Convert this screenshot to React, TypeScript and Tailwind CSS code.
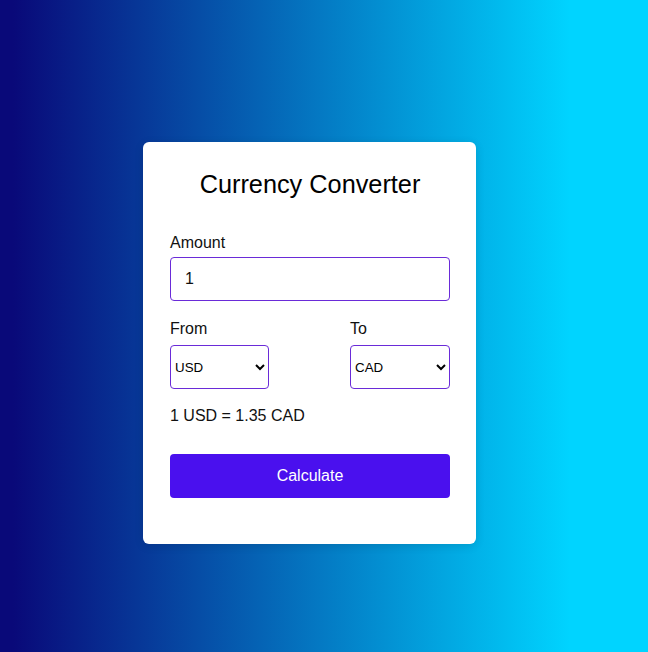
import React, { useState } from "react";

export default function App() {
  const [amount, setAmount] = useState("1");
  const [from, setFrom] = useState("USD");
  const [to, setTo] = useState("CAD");
  return (
    <div
      className="w-full min-h-[652px] flex items-start justify-center pt-[142px] pr-[29px] bg-[linear-gradient(90deg,#090979_2%,#00d4ff_88%)]"
      style={{ fontFamily: '"Liberation Sans", Arial, sans-serif' }}
    >
      <div className="w-[333px] bg-white rounded-[6px] shadow-[0_2px_10px_rgba(0,0,0,0.12)] pl-[27px] pr-[26px] pt-[28px] pb-[46px] flex flex-col text-[#111]">
        <h2 className="text-[25.3px] leading-[28px] text-center text-black">Currency Converter</h2>
        <label className="mt-[36px] text-[16px] leading-[18px]">Amount</label>
        <input
          value={amount}
          onChange={(e) => setAmount(e.target.value)}
          className="mt-[5px] h-[44px] w-full border border-[#6a2bd8] rounded-[4px] px-[14px] text-[16px] outline-none"
        />
        <div className="mt-[19px] flex justify-between">
          <div className="flex flex-col w-[99px]">
            <span className="text-[16px] leading-[18px]">From</span>
            <select
              value={from}
              onChange={(e) => setFrom(e.target.value)}
              className="mt-[7px] h-[44px] w-[99px] border border-[#6a2bd8] rounded-[4px] text-[13.33px] bg-white text-black"
            >
              <option>USD</option>
              <option>EUR</option>
              <option>GBP</option>
              <option>CAD</option>
            </select>
          </div>
          <div className="flex flex-col w-[100px]">
            <span className="text-[16px] leading-[18px]">To</span>
            <select
              value={to}
              onChange={(e) => setTo(e.target.value)}
              className="mt-[7px] h-[44px] w-[100px] border border-[#6a2bd8] rounded-[4px] text-[13.33px] bg-white text-black"
            >
              <option>USD</option>
              <option>EUR</option>
              <option>GBP</option>
              <option>CAD</option>
            </select>
          </div>
        </div>
        <div className="mt-[18px] text-[16px] leading-[18px]">1 USD = 1.35 CAD</div>
        <button className="mt-[29px] h-[44px] w-full bg-[#4a10ee] rounded-[4px] text-white text-[16px]">
          Calculate
        </button>
      </div>
    </div>
  );
}
